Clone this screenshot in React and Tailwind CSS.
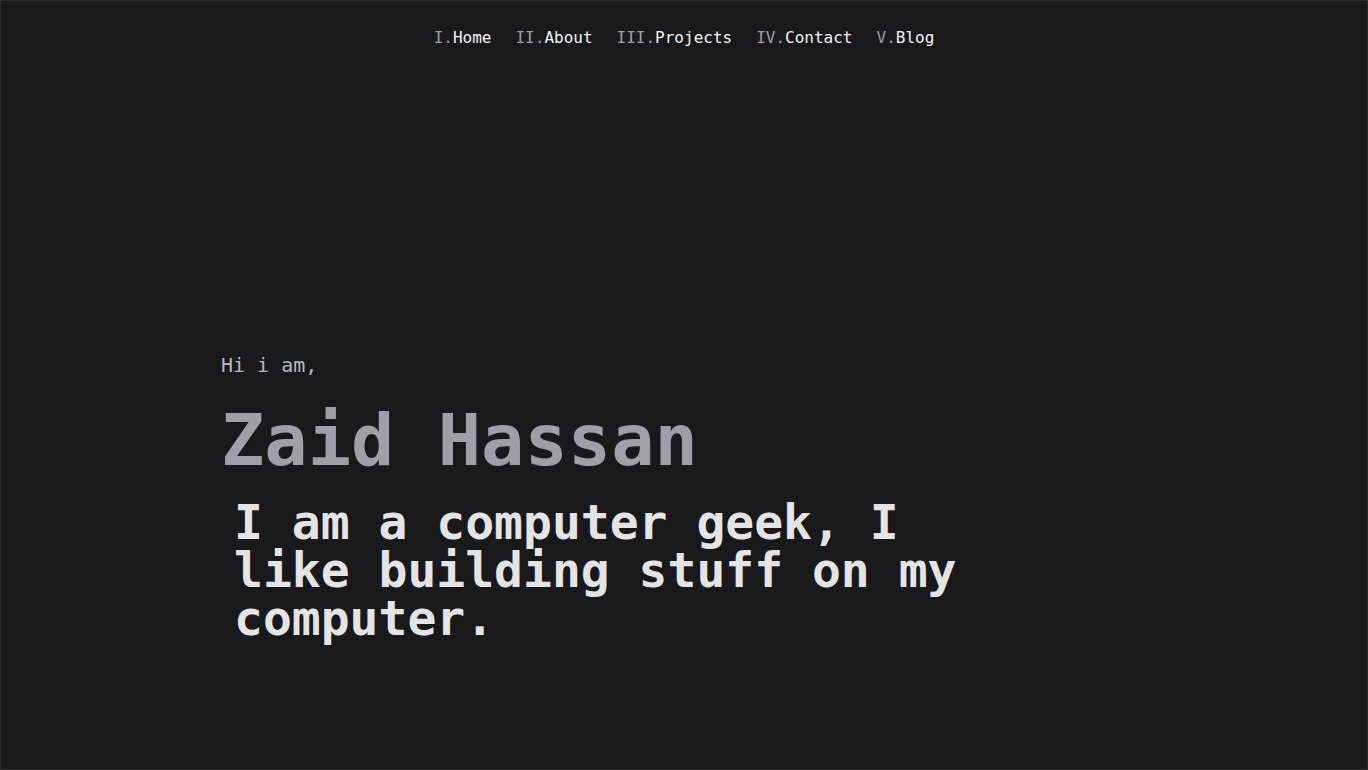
const links = [
  { num: 'I.', label: 'Home' },
  { num: 'II.', label: 'About' },
  { num: 'III.', label: 'Projects' },
  { num: 'IV.', label: 'Contact' },
  { num: 'V.', label: 'Blog' },
];

export default function App() {
  return (
    <div
      className="h-[770px] w-full bg-[#19191b] border border-[#2c2c2f] overflow-hidden"
      style={{ fontFamily: '"DejaVu Sans Mono", "Liberation Mono", monospace' }}
    >
      <nav className="flex justify-center gap-6 pt-[25px] text-base leading-6">
        {links.map((link) => (
          <a key={link.label} href="#" className="text-zinc-100">
            <span className="text-zinc-400">{link.num}</span>
            {link.label}
          </a>
        ))}
      </nav>

      <section className="pl-[220px] pt-[301px]">
        <p className="text-xl leading-7 text-[#b4b9c6]">Hi i am,</p>
        <h1 className="mt-[25px] text-7xl leading-none font-semibold text-zinc-400">
          Zaid Hassan
        </h1>
        <p className="mt-[22px] pl-[13px] max-w-[770px] text-5xl leading-none font-bold text-zinc-200">
          I am a computer geek, I like building stuff on my computer.
        </p>
      </section>
    </div>
  );
}
